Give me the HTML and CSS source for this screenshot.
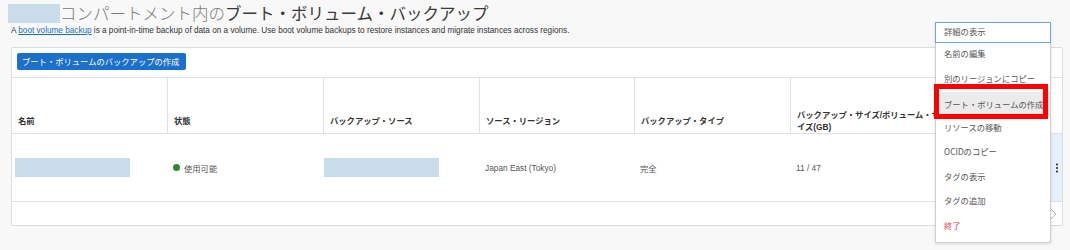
FILE: index.html
```html
<!DOCTYPE html>
<html lang="ja">
<head>
<meta charset="utf-8">
<title>ブート・ボリューム・バックアップ</title>
<link rel="stylesheet" href="styles.css">
</head>
<body>
<div class="page">
  <div class="title-row">
    <span class="redact redact-title"></span>
    <h1 class="title"><span class="title-light">コンパートメント内の</span><span class="title-dark">ブート・ボリューム・バックアップ</span></h1>
  </div>
  <p class="desc">A <a class="link" href="#">boot volume backup</a> is a point-in-time backup of data on a volume. Use boot volume backups to restore instances and migrate instances across regions.</p>

  <div class="panel">
    <div class="toolbar">
      <button class="btn-primary">ブート・ボリュームのバックアップの作成</button>
    </div>
    <div class="grid">
      <div class="hcell">名前</div>
      <div class="hcell div">状態</div>
      <div class="hcell div">バックアップ・ソース</div>
      <div class="hcell div">ソース・リージョン</div>
      <div class="hcell div">バックアップ・タイプ</div>
      <div class="hcell div clip">バックアップ・サイズ/ボリューム・サ<br>イズ(GB)</div>
      <div class="hcell div"></div>
      <div class="hcell"></div>

      <div class="dcell"><span class="redact redact-name"></span></div>
      <div class="dcell"><span class="dot"></span>使用可能</div>
      <div class="dcell"><span class="redact redact-src"></span></div>
      <div class="dcell">Japan East (Tokyo)</div>
      <div class="dcell">完全</div>
      <div class="dcell">11 / 47</div>
      <div class="dcell"></div>
      <div class="dcell action">
        <svg width="4" height="10" viewBox="0 0 4 10"><circle cx="2" cy="1.5" r="1.1" fill="#333"/><circle cx="2" cy="5" r="1.1" fill="#333"/><circle cx="2" cy="8.5" r="1.1" fill="#333"/></svg>
      </div>
    </div>
    <div class="footer">
      <svg class="chev" width="7" height="12" viewBox="0 0 7 12"><polyline points="1,1 6,6 1,11" fill="none" stroke="#b5b5b5" stroke-width="1"/></svg>
    </div>
  </div>
</div>

<ul class="menu">
  <li class="mi focus">詳細の表示</li>
  <li class="mi">名前の編集</li>
  <li class="mi">別のリージョンにコピー</li>
  <li class="mi hover">ブート・ボリュームの作成</li>
  <li class="mi">リソースの移動</li>
  <li class="mi">OCIDのコピー</li>
  <li class="mi">タグの表示</li>
  <li class="mi">タグの追加</li>
  <li class="mi danger">終了</li>
</ul>
<div class="annot"></div>
</body>
</html>
```

FILE: styles.css
```css
html, body {
  margin: 0;
  padding: 0;
  background: #f8f8f8;
  font-family: "Liberation Sans", "Noto Sans CJK JP", sans-serif;
  color: #555;
}
.page {
  padding: 3px 7px 0 11px;
  width: 1052px;
}
.title-row {
  display: flex;
  align-items: center;
  height: 20px;
  margin-left: -3px;
}
.redact {
  display: inline-block;
  background: #c9dcea;
}
.redact-title {
  width: 52px;
  height: 19px;
}
.title {
  margin: 0;
  font-family: "Noto Sans CJK JP", sans-serif;
  font-size: 16.5px;
  font-weight: 400;
  line-height: 20px;
  white-space: nowrap;
}
.title-light {
  color: #7a7a7a;
  font-weight: 300;
}
.title-dark {
  color: #3a3a3a;
}
.desc {
  margin: 2px 0 0;
  font-size: 8.2px;
  line-height: 12px;
  color: #333;
  height: 12px;
}
.link {
  color: #1a6fc9;
  text-decoration: underline;
}
.panel {
  margin-top: 10px;
  background: #fff;
  border: 1px solid #dcdcdc;
  border-radius: 2px;
}
.toolbar {
  padding: 5px 5px 7px;
  height: 17px;
}
.btn-primary {
  display: block;
  height: 17px;
  width: 169px;
  margin: 0;
  padding: 0 0 0 5px;
  border: 0;
  border-radius: 2px;
  background: #1b70cb;
  color: #fff;
  font-family: "Noto Sans CJK JP", sans-serif;
  font-size: 8.3px;
  line-height: 17px;
  text-align: left;
  white-space: nowrap;
}
.grid {
  display: grid;
  grid-template-columns: 155px 156px 156px 155px 156px 160px 101px 11px;
  border-top: 1px solid #dfe1e4;
}
.hcell {
  height: 49px;
  padding: 0 6px 6px;
  border-bottom: 1px solid #dfe1e4;
  display: flex;
  align-items: flex-end;
  font-size: 8.3px;
  line-height: 12px;
  font-weight: 700;
  color: #333;
  white-space: nowrap;
  overflow: hidden;
}
.hcell.div {
  border-left: 1px solid #dfe1e4;
}
.hcell.clip {
  display: block;
  padding-top: 31px;
  height: 18px;
  padding-right: 0;
}
.dcell {
  height: 67px;
  padding: 0 6px;
  border-bottom: 1px solid #dfe1e4;
  display: flex;
  align-items: center;
  font-size: 8.3px;
  color: #555;
  white-space: nowrap;
  overflow: hidden;
}
.redact-name {
  width: 115px;
  height: 19px;
  margin-left: -3px;
}
.redact-src {
  width: 115px;
  height: 19px;
  margin-left: -5px;
}
.dot {
  display: inline-block;
  width: 7px;
  height: 7px;
  border-radius: 50%;
  background: #2b8a2f;
  margin-right: 4px;
}
.dcell.action {
  padding: 0;
  justify-content: center;
  background: #e5f0fb;
}
.footer {
  height: 23px;
  display: flex;
  justify-content: flex-end;
  align-items: center;
  padding-right: 5px;
}
.menu {
  position: absolute;
  left: 935px;
  top: 22px;
  width: 116px;
  margin: 0;
  padding: 0 0 3px;
  list-style: none;
  background: #fff;
  border: 1px solid #cfcfcf;
  border-top: 0;
  box-sizing: border-box;
  box-shadow: 0 1px 3px rgba(0,0,0,0.12);
  font-family: "Noto Sans CJK JP", sans-serif;
  font-size: 8.3px;
  color: #555;
}
.mi {
  height: 24.5px;
  line-height: 21.5px;
  padding-left: 8px;
  white-space: nowrap;
}
.mi.focus {
  height: 19px;
  line-height: 17px;
  border: 1px solid #6fa3dc;
  margin: 0 -1px;
  padding-left: 8px;
}
.mi.hover {
  background: #ebebeb;
  line-height: 24.5px;
}
.mi.danger {
  color: #ee3b4b;
}
.annot {
  position: absolute;
  left: 934px;
  top: 84px;
  width: 114px;
  height: 35px;
  box-sizing: border-box;
  border: 5px solid #ff0000;
}
```
